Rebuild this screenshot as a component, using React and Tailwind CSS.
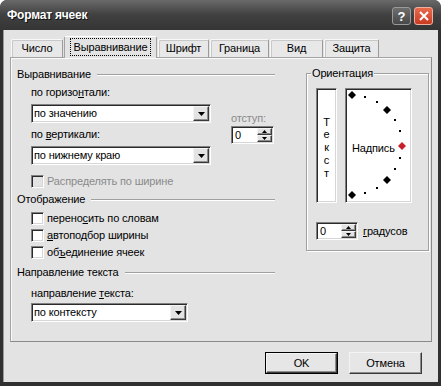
import React from "react";

const sunken =
  "border border-t-[#808080] border-l-[#808080] border-r-white border-b-white shadow-[inset_1px_1px_0_#2a2a2a,inset_-1px_-1px_0_#d6d6d6]";
const raised =
  "border border-t-[#f4f4f4] border-l-[#f4f4f4] border-r-[#3a3a3a] border-b-[#3a3a3a] shadow-[inset_-1px_-1px_0_#8c8c8c]";

function Tri() {
  return (
    <svg width="7" height="4" viewBox="0 0 7 4">
      <polygon points="0,0 7,0 3.5,4" fill="#000" />
    </svg>
  );
}

function Select({ value, w }) {
  return (
    <div className={`${sunken} bg-white h-[19px] flex items-center ${w}`}>
      <span className="flex-1 pl-[2px] leading-[13px]">{value}</span>
      <div className={`${raised} bg-[#e3e3e3] w-[16px] h-[15px] mr-px flex items-center justify-center`}>
        <Tri />
      </div>
    </div>
  );
}

function Spin({ w }) {
  return (
    <div className={`${sunken} bg-white h-[18px] flex items-center ${w}`}>
      <span className="flex-1 pl-[3px] leading-[13px]">0</span>
      <div className="flex flex-col mr-px">
        <div className={`${raised} bg-[#e3e3e3] w-[15px] h-[7px] flex items-center justify-center`}>
          <svg width="5" height="3" viewBox="0 0 5 3"><polygon points="2.5,0 5,3 0,3" fill="#000" /></svg>
        </div>
        <div className={`${raised} bg-[#e3e3e3] w-[15px] h-[7px] flex items-center justify-center`}>
          <svg width="5" height="3" viewBox="0 0 5 3"><polygon points="0,0 5,0 2.5,3" fill="#000" /></svg>
        </div>
      </div>
    </div>
  );
}

function Check({ children, disabled }) {
  return (
    <div className="flex items-center h-[13px] gap-[3px]">
      <div className={`w-[13px] h-[13px] ${sunken} ${disabled ? "bg-[#e3e3e3]" : "bg-white"}`} />
      <span className={disabled ? "text-[#8a8a8a]" : ""}>{children}</span>
    </div>
  );
}

function Header({ children, className = "" }) {
  return (
    <div className={`flex items-center h-[13px] gap-[6px] ${className}`}>
      <span>{children}</span>
      <div className="flex-1 border-t border-t-[#a0a0a0] border-b border-b-white" />
    </div>
  );
}

const tabs = [
  { label: "Число", w: "w-[52px]" },
  { label: "Выравнивание", w: "w-[93px]", active: true },
  { label: "Шрифт", w: "w-[51px]" },
  { label: "Граница", w: "w-[59px]" },
  { label: "Вид", w: "w-[53px]" },
  { label: "Защита", w: "w-[55px]" },
];

const dots = [
  [20, 9], [32, 14], [50, 32], [55, 43], [55, 70], [50, 81], [32, 100], [20, 105],
];
const diamonds = [
  [7, 7], [42, 22], [42, 92], [7, 107],
];

export default function App() {
  return (
    <div className="w-[441px] h-[386px] bg-[#303030] rounded-t-[7px] flex flex-col font-['Liberation_Sans',Arial,sans-serif] text-[11px] leading-[13px] tracking-[-0.15px] text-black overflow-hidden">
      {/* title bar */}
      <div className="h-[30px] shrink-0 flex items-center justify-between pl-[7px] pr-[8px] rounded-t-[7px] bg-gradient-to-b from-[#6a6a6a] via-[#404040] to-[#353535]">
        <span className="text-white font-bold text-[12px] tracking-[-0.2px] [text-shadow:1px_1px_0_#111]">
          Формат ячеек
        </span>
        <div className="flex gap-[3px] mt-[2px]">
          <div className="w-[19px] h-[18px] rounded-[3px] border border-[#9a9a9a] bg-gradient-to-b from-[#6e6e6e] to-[#484848] flex items-center justify-center text-white font-bold text-[13px]">
            ?
          </div>
          <div className="w-[19px] h-[18px] rounded-[3px] border border-[#f0b0a0] bg-gradient-to-b from-[#e86a4c] to-[#c93a22] flex items-center justify-center">
            <svg width="10" height="10" viewBox="0 0 10 10">
              <path d="M1 1 L9 9 M9 1 L1 9" stroke="#fff" strokeWidth="2" />
            </svg>
          </div>
        </div>
      </div>

      {/* body */}
      <div className="flex-1 mx-[3px] mb-[4px] bg-[#e3e3e3] px-[6px] pt-[6px] flex flex-col border-l border-l-[#9a9a9a]">
        {/* tabs */}
        <div className="flex items-end h-[21px] pl-[1px] gap-[1px] relative z-10">
          {tabs.map((t) =>
            t.active ? (
              <div
                key={t.label}
                className={`${t.w} h-[22px] -mb-px bg-[#e3e3e3] border border-b-0 border-[#a3a3a3] border-t-white rounded-t-[2px] flex items-start justify-center pt-[1px]`}
              >
                <span className="border border-dotted border-black px-[3px] h-[18px] flex items-center">
                  {t.label}
                </span>
              </div>
            ) : (
              <div
                key={t.label}
                className={`${t.w} h-[18px] bg-[#e8e8e8] border border-b-0 border-t-[#f8f8f8] border-l-[#f8f8f8] border-r-[#9a9a9a] shadow-[inset_1px_1px_0_#c8c8c8] rounded-t-[2px] flex items-center justify-center`}
              >
                {t.label}
              </div>
            )
          )}
        </div>

        {/* panel */}
        <div className="h-[285px] border border-t-[#a3a3a3] border-l-[#a3a3a3] border-r-[#8a8a8a] border-b-[#8a8a8a] shadow-[inset_1px_1px_0_#fafafa] flex pl-[6px]">
          {/* left column */}
          <div className="w-[258px] mt-[10px] flex flex-col">
            <Header>Выравнивание</Header>
            <div className="flex pl-[14px] gap-[20px]">
              <div className="flex flex-col">
                <div className="mt-[5px]">
                  по горизо<u>н</u>тали:
                </div>
                <div className="mt-[5px]">
                  <Select value="по значению" w="w-[180px]" />
                </div>
                <div className="mt-[5px]">
                  по <u>в</u>ертикали:
                </div>
                <div className="mt-[5px]">
                  <Select value="по нижнему краю" w="w-[180px]" />
                </div>
              </div>
              <div className="flex flex-col mt-[31px]">
                <div className="text-[#8a8a8a]">отступ:</div>
                <div className="mt-[1px]">
                  <Spin w="w-[43px]" />
                </div>
              </div>
            </div>
            <div className="pl-[14px] mt-[10px]">
              <Check disabled>Распределять по ширине</Check>
            </div>
            <Header className="mt-[5px]">Отображение</Header>
            <div className="pl-[14px] mt-[6px] flex flex-col gap-[4px]">
              <Check>
                перено<u>с</u>ить по словам
              </Check>
              <Check>
                <u>а</u>втоподбор ширины
              </Check>
              <Check>
                об<u>ъ</u>единение ячеек
              </Check>
            </div>
            <Header className="mt-[7px]">Направление текста</Header>
            <div className="pl-[14px] mt-[8px]">
              направление <u>т</u>екста:
            </div>
            <div className="pl-[14px] mt-[3px]">
              <Select value="по контексту" w="w-[157px]" />
            </div>
          </div>

          {/* right column */}
          <div className="ml-[31px] mt-[15px]">
            <div className="relative w-[123px] h-[178px] border border-[#a0a0a0] shadow-[inset_1px_1px_0_#fff,1px_1px_0_#fff] pl-[9px] pt-[14px]">
              <span className="absolute -top-[7px] left-[4px] px-[1px] bg-[#e3e3e3]">Ориентация</span>
              <div className="flex gap-[8px]">
                <div className={`w-[21px] h-[115px] ${sunken} bg-white flex flex-col items-center justify-center pt-[4px]`}>
                  {["Т", "е", "к", "с", "т"].map((c, i) => (
                    <span key={i} className="leading-[12.7px]">
                      {c}
                    </span>
                  ))}
                </div>
                <div className={`relative w-[67px] h-[115px] ${sunken} bg-white`}>
                  <svg className="absolute left-[-1px] top-[-1px]" width="67" height="115" viewBox="0 0 67 115">
                    {dots.map(([x, y], i) => (
                      <rect key={i} x={x - 1} y={y - 1} width="2" height="2" fill="#000" />
                    ))}
                    {diamonds.map(([x, y], i) => (
                      <polygon key={i} points={`${x},${y - 4} ${x + 4},${y} ${x},${y + 4} ${x - 4},${y}`} fill="#000" />
                    ))}
                    <polygon points="57,54 61,58 57,62 53,58" fill="#c8202a" />
                  </svg>
                  <span className="absolute left-[6px] top-[53px]">Надпись</span>
                </div>
              </div>
              <div className="flex items-center mt-[19px] gap-[5px]">
                <Spin w="w-[42px]" />
                <span>
                  <u>г</u>радусов
                </span>
              </div>
            </div>
          </div>
        </div>

        {/* buttons */}
        <div className="flex justify-end gap-[11px] pr-[10px] mt-[10px]">
          <div className="w-[73px] h-[22px] border border-black flex">
            <div className={`flex-1 ${raised} bg-[#e6e6e6] flex items-center justify-center`}>OK</div>
          </div>
          <div className={`w-[73px] h-[22px] ${raised} bg-[#e6e6e6] flex items-center justify-center`}>
            Отмена
          </div>
        </div>
      </div>
    </div>
  );
}
